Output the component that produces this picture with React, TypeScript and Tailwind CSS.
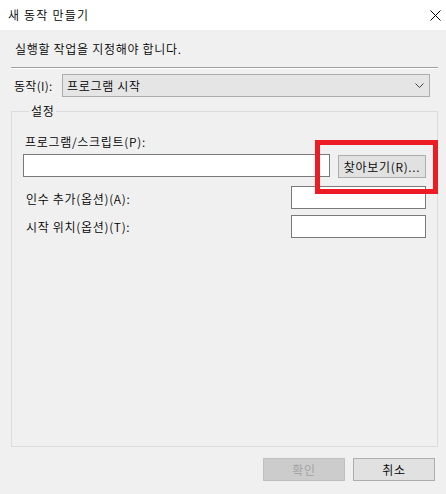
import React from 'react'

function CloseIcon() {
    return (
        <svg width="11" height="11" viewBox="0 0 11 11" className="block">
            <path d="M0.5 0.5 L10.5 10.5 M10.5 0.5 L0.5 10.5" stroke="#000" strokeWidth="1" fill="none" />
        </svg>
    )
}

function Chevron() {
    return (
        <svg width="9" height="5" viewBox="0 0 9 5" className="block">
            <path d="M0.5 0.5 L4.5 4.5 L8.5 0.5" stroke="#444" strokeWidth="1" fill="none" />
        </svg>
    )
}

export default function App() {
    return (
        <div
            className="relative w-[446px] h-[494px] bg-[#f0f0f0] flex flex-col text-[12px] leading-[16px] tracking-[0.7px] font-[350] text-black overflow-hidden"
            style={{ fontFamily: '"Noto Sans CJK KR", "Noto Sans", sans-serif' }}
        >
            {/* title bar */}
            <div className="h-[30px] bg-white flex items-center justify-between pl-[8px] pr-[5px] shrink-0">
                <span className="text-[12px] tracking-[1.2px]">새 동작 만들기</span>
                <CloseIcon />
            </div>

            <div className="flex flex-col pl-[11px] pr-[8px]">
                <p className="mt-[11px] ml-[4px]">실행할 작업을 지정해야 합니다.</p>
                <div className="mt-[10px] h-[2px] border-t border-[#a0a0a0] border-b border-b-white"></div>

                <div className="mt-[5px] flex items-center">
                    <span className="w-[51px] pl-[3px] tracking-[0.3px]">동작(I):</span>
                    <div className="w-[368px] h-[23px] bg-[#e5e5e5] border border-[#adadad] flex items-center justify-between pl-[4px] pr-[5px]">
                        <span>프로그램 시작</span>
                        <Chevron />
                    </div>
                </div>

                <fieldset className="mt-[6px] h-[344px] border border-[#dcdcdc] px-[11px]">
                    <legend className="ml-[6px] px-[2px]">설정</legend>
                    <p className="mt-[15px] ml-[2px]">프로그램/스크립트(P):</p>
                    <div className="mt-[4px] flex items-start justify-between">
                        <div className="w-[307px] h-[23px] bg-white border border-[#7a7a7a]"></div>
                        <button className="mt-[1px] w-[88px] h-[23px] bg-[#e1e1e1] border border-[#adadad] flex items-center justify-center">
                            찾아보기(R)...
                        </button>
                    </div>
                    <div className="mt-[8px] flex items-center justify-between">
                        <span className="ml-[3px] mt-[2px]">인수 추가(옵션)(A):</span>
                        <div className="w-[135px] h-[23px] bg-white border border-[#7a7a7a]"></div>
                    </div>
                    <div className="mt-[6px] flex items-center justify-between">
                        <span className="ml-[3px] mt-[1px]">시작 위치(옵션)(T):</span>
                        <div className="w-[135px] h-[23px] bg-white border border-[#7a7a7a]"></div>
                    </div>
                </fieldset>

                <div className="mt-[11px] flex justify-end gap-[8px] pr-[3px]">
                    <button className="w-[82px] h-[23px] bg-[#cccccc] border border-[#bfbfbf] text-[#a0a0a0] flex items-center justify-center">
                        확인
                    </button>
                    <button className="w-[82px] h-[23px] bg-[#e1e1e1] border border-[#adadad] flex items-center justify-center">
                        취소
                    </button>
                </div>
            </div>

            {/* red highlight around browse button */}
            <div className="absolute left-[315px] top-[140px] w-[123px] h-[54px] border-[5px] border-[#ed1c24] pointer-events-none"></div>
        </div>
    )
}
